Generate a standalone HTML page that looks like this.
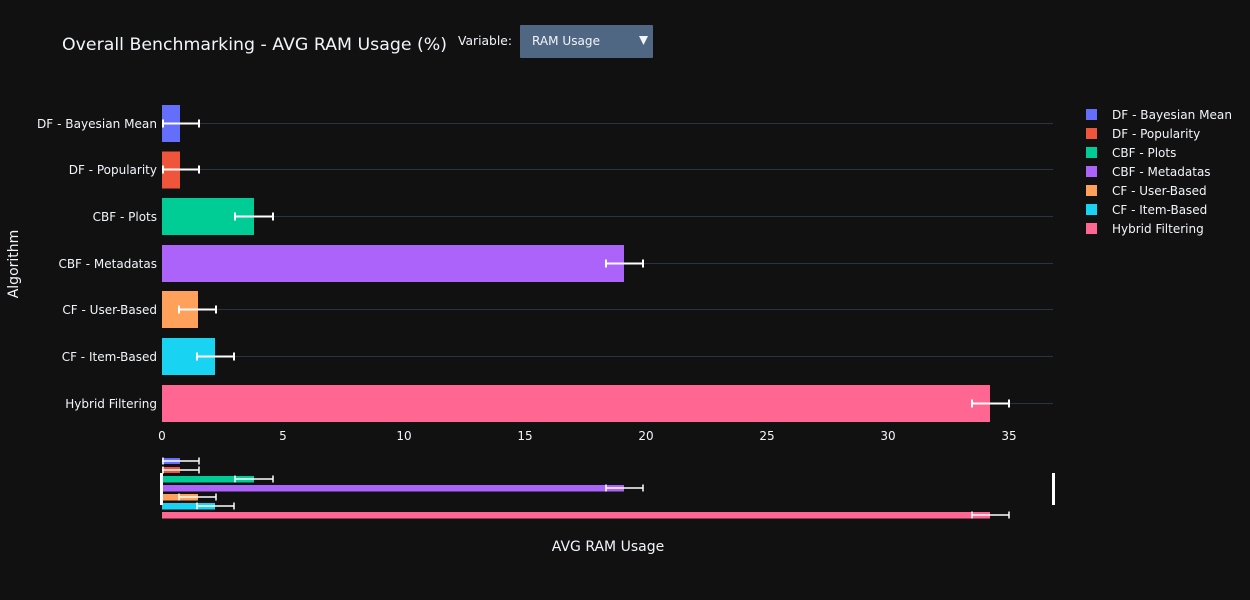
<!DOCTYPE html>
<html><head><meta charset="utf-8"><style>
html,body{margin:0;padding:0;background:#111111;}
svg{display:block;font-family:"DejaVu Sans","Liberation Sans",sans-serif;}
</style></head><body>
<svg width="1250" height="600" viewBox="0 0 1250 600" xmlns="http://www.w3.org/2000/svg">
<rect width="1250" height="600" fill="#111111"/>
<text x="62" y="50" fill="#f2f5fa" font-size="17" textLength="385" lengthAdjust="spacingAndGlyphs">Overall Benchmarking - AVG RAM Usage (%)</text>
<text x="458" y="45" fill="#f2f5fa" font-size="12" textLength="54" lengthAdjust="spacingAndGlyphs">Variable:</text>
<rect x="520" y="25" width="133" height="33" fill="#506784" rx="1"/>
<text x="532" y="45" fill="#f2f5fa" font-size="12" textLength="68" lengthAdjust="spacingAndGlyphs">RAM Usage</text>
<path d="M639 36h9l-4.5 9z" fill="#f2f5fa"/>
<!-- gridlines -->
<g stroke="#283442" stroke-width="1">
<line x1="162" x2="1053" y1="123.5" y2="123.5"/>
<line x1="162" x2="1053" y1="169.5" y2="169.5"/>
<line x1="162" x2="1053" y1="216.5" y2="216.5"/>
<line x1="162" x2="1053" y1="263.5" y2="263.5"/>
<line x1="162" x2="1053" y1="309.5" y2="309.5"/>
<line x1="162" x2="1053" y1="356.5" y2="356.5"/>
<line x1="162" x2="1053" y1="403.5" y2="403.5"/>
</g>
<rect x="162" y="105" width="18" height="37" fill="#636efa"/>
<rect x="162" y="151.5" width="18" height="37" fill="#ef553b"/>
<rect x="162" y="198" width="92" height="37" fill="#00cc96"/>
<rect x="162" y="245" width="462" height="37" fill="#ab63fa"/>
<rect x="162" y="291" width="36" height="37" fill="#ffa15a"/>
<rect x="162" y="338" width="53" height="37" fill="#19d3f3"/>
<rect x="162" y="385" width="828" height="37" fill="#ff6692"/>
<g stroke="#ffffff" stroke-width="2" fill="none">
<path d="M162 123.5H199M163 119.5v8M199 119.5v8"/>
<path d="M162 169.5H199M163 165.5v8M199 165.5v8"/>
<path d="M235 216.5H273M235 212.5v8M273 212.5v8"/>
<path d="M606 263.5H643M606 259.5v8M643 259.5v8"/>
<path d="M179 309.5H216M179 305.5v8M216 305.5v8"/>
<path d="M197 356.5H234M197 352.5v8M234 352.5v8"/>
<path d="M972 403.5H1009M972 399.5v8M1009 399.5v8"/>
</g>
<g fill="#f2f5fa" font-size="12" text-anchor="end">
<text x="157" y="128" textLength="120" lengthAdjust="spacingAndGlyphs">DF - Bayesian Mean</text>
<text x="157" y="174">DF - Popularity</text>
<text x="157" y="221">CBF - Plots</text>
<text x="157" y="268">CBF - Metadatas</text>
<text x="157" y="314">CF - User-Based</text>
<text x="157" y="361">CF - Item-Based</text>
<text x="157" y="408">Hybrid Filtering</text>
</g>
<text transform="translate(18,264) rotate(-90)" fill="#f2f5fa" font-size="14" text-anchor="middle">Algorithm</text>
<g fill="#f2f5fa" font-size="12" text-anchor="middle">
<text x="162" y="440">0</text><text x="283" y="440">5</text><text x="404" y="440">10</text>
<text x="525" y="440">15</text><text x="646" y="440">20</text><text x="767" y="440">25</text>
<text x="888" y="440">30</text><text x="1009" y="440">35</text>
</g>
<rect x="162" y="458" width="18" height="6" fill="#636efa"/>
<rect x="162" y="467" width="18" height="6" fill="#ef553b"/>
<rect x="162" y="476" width="92" height="6.5" fill="#00cc96"/>
<rect x="162" y="485" width="462" height="6.5" fill="#ab63fa"/>
<rect x="162" y="494" width="36" height="6.5" fill="#ffa15a"/>
<rect x="162" y="503" width="53" height="6.5" fill="#19d3f3"/>
<rect x="162" y="512" width="828" height="6.5" fill="#ff6692"/>
<g stroke="#ffffff" stroke-width="1.5" fill="none">
<path d="M162 461H199M163 457.5v7M199 457.5v7"/>
<path d="M162 470H199M163 466.5v7M199 466.5v7"/>
<path d="M235 479H273M235 475.5v7M273 475.5v7"/>
<path d="M606 488H643M606 484.5v7M643 484.5v7"/>
<path d="M179 497H216M179 493.5v7M216 493.5v7"/>
<path d="M197 506H234M197 502.5v7M234 502.5v7"/>
<path d="M972 515H1009M972 511.5v7M1009 511.5v7"/>
</g>
<rect x="160" y="473" width="3" height="32" fill="#ffffff"/>
<rect x="1052" y="473" width="3" height="32" fill="#ffffff"/>
<text x="608" y="551" fill="#f2f5fa" font-size="14" text-anchor="middle">AVG RAM Usage</text>
<g font-size="12" fill="#f2f5fa">
<rect x="1086" y="109" width="11" height="11" fill="#636efa"/><text x="1112" y="119" textLength="120" lengthAdjust="spacingAndGlyphs">DF - Bayesian Mean</text>
<rect x="1086" y="128" width="11" height="11" fill="#ef553b"/><text x="1112" y="138">DF - Popularity</text>
<rect x="1086" y="147" width="11" height="11" fill="#00cc96"/><text x="1112" y="157">CBF - Plots</text>
<rect x="1086" y="166" width="11" height="11" fill="#ab63fa"/><text x="1112" y="176">CBF - Metadatas</text>
<rect x="1086" y="185" width="11" height="11" fill="#ffa15a"/><text x="1112" y="195">CF - User-Based</text>
<rect x="1086" y="204" width="11" height="11" fill="#19d3f3"/><text x="1112" y="214">CF - Item-Based</text>
<rect x="1086" y="223" width="11" height="11" fill="#ff6692"/><text x="1112" y="233">Hybrid Filtering</text>
</g>
</svg>
</body></html>
